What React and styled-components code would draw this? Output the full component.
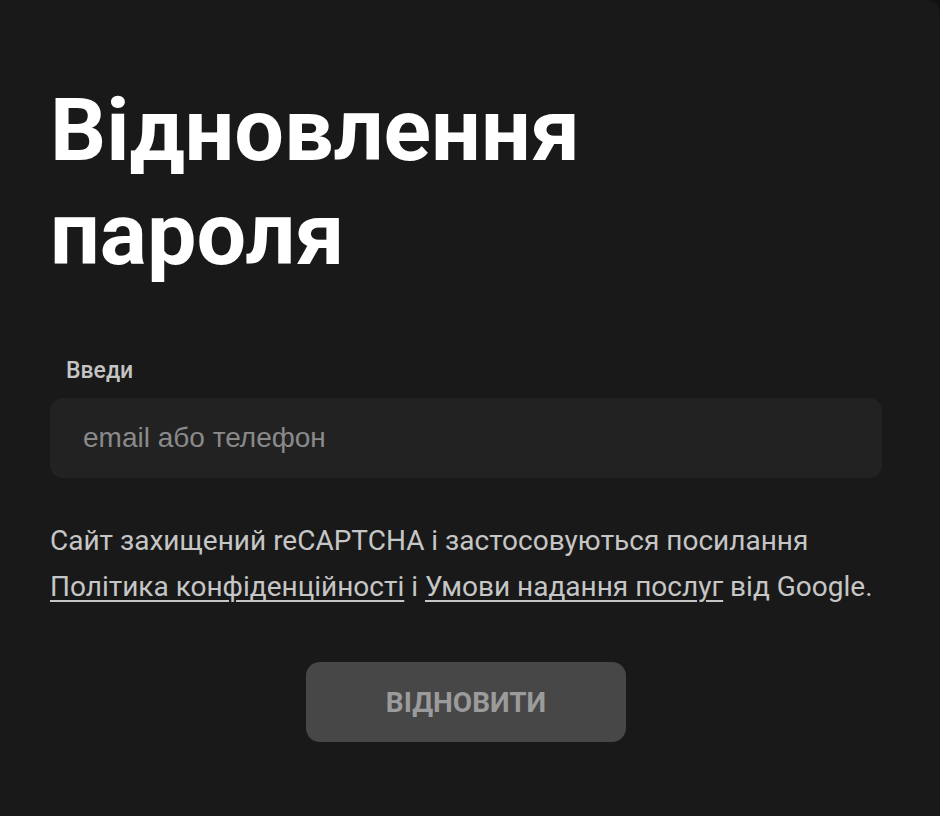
import React from "react";
import styled, { createGlobalStyle } from "styled-components";

const Global = createGlobalStyle`
  html, body { margin: 0; padding: 0; background: #121212; }
  body { font-family: Roboto, "Noto Sans", sans-serif; }
  * { box-sizing: border-box; }
`;

const Page = styled.div`
  width: 940px;
  height: 816px;
  background: #191919;
  border-top-right-radius: 14px;
  padding: 78px 58px 0 50px;
  display: flex;
  flex-direction: column;
`;

const Title = styled.h1`
  margin: 0;
  max-width: 620px;
  font-family: Roboto, sans-serif;
  font-weight: 700;
  font-size: 88px;
  line-height: 104px;
  color: #ffffff;
`;

const Field = styled.label`
  display: flex;
  flex-direction: column;
  margin-top: 72px;
`;

const Label = styled.span`
  font-family: Roboto, sans-serif;
  font-weight: 500;
  font-size: 23px;
  line-height: 26px;
  color: #c4c4c4;
  padding-left: 16px;
  margin-bottom: 14px;
`;

const Input = styled.input`
  height: 80px;
  width: 100%;
  border: none;
  outline: none;
  border-radius: 13px;
  background: #222222;
  padding: 0 33px;
  font-family: "Liberation Sans", Arial, sans-serif;
  font-size: 28px;
  color: #e0e0e0;
  &::placeholder { color: #8a8a8a; }
`;

const Notice = styled.p`
  margin: 40px 0 0;
  font-family: Roboto, sans-serif;
  font-size: 28px;
  line-height: 46px;
  color: #c6c6c6;
`;

const Link = styled.a`
  color: #c6c6c6;
  text-decoration: underline;
  text-underline-offset: 4px;
  text-decoration-thickness: 2px;
`;

const Actions = styled.div`
  display: flex;
  justify-content: center;
  margin-top: 52px;
`;

const Button = styled.button`
  width: 320px;
  height: 80px;
  border: none;
  border-radius: 14px;
  background: #474747;
  color: #9b9b9b;
  font-family: Roboto, sans-serif;
  font-weight: 700;
  font-size: 28px;
  text-transform: uppercase;
`;

export default function App() {
  return (
    <>
      <Global />
      <Page>
        <Title>Відновлення пароля</Title>
        <Field>
          <Label>Введи</Label>
          <Input placeholder="email або телефон" />
        </Field>
        <Notice>
          Сайт захищений reCAPTCHA і застосовуються посилання{" "}
          <Link href="#">Політика конфіденційності</Link> і{" "}
          <Link href="#">Умови надання послуг</Link> від Google.
        </Notice>
        <Actions>
          <Button disabled>Відновити</Button>
        </Actions>
      </Page>
    </>
  );
}
